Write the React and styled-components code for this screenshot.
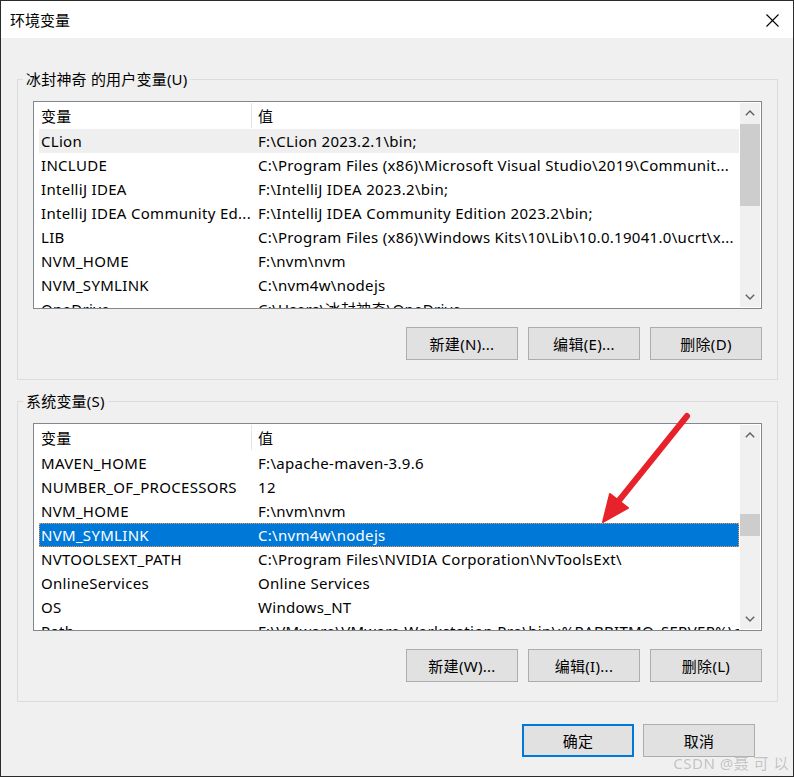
import React from 'react';
import styled, { createGlobalStyle } from 'styled-components';

const GlobalStyle = createGlobalStyle`
  html, body {
    margin: 0;
    padding: 0;
    background: #f0f0f0;
  }
  * {
    box-sizing: border-box;
  }
`;

const FONT = '"Noto Sans", "Noto Sans CJK SC", sans-serif';

const Window = styled.div`
  position: relative;
  width: 794px;
  height: 777px;
  border: 1px solid #2b2b2b;
  background: #f0f0f0;
  display: flex;
  flex-direction: column;
  font-family: ${FONT};
  font-size: 15px;
  color: #000;
  overflow: hidden;
`;

const TitleBar = styled.div`
  height: 37px;
  flex: none;
  background: #fff;
  display: flex;
  align-items: center;
  justify-content: space-between;
  padding: 0 14px 0 9px;
`;

const Title = styled.span`
  font-size: 15px;
  line-height: 20px;
  margin-top: 1px;
`;

const CloseIcon = styled.svg`
  width: 13px;
  height: 13px;
  margin-top: 1px;
`;

const Body = styled.div`
  flex: 1;
  display: flex;
  flex-direction: column;
  padding: 41px 15px 0 16px;
`;

const Group = styled.div`
  border: 1px solid #dcdcdc;
  padding: 0 15px 19px 15px;
  display: flex;
  flex-direction: column;
  margin-top: ${p => p.$gap || 0}px;
`;

const Legend = styled.div`
  align-self: flex-start;
  margin: -11px 0 0 -10px;
  padding: 0 3px;
  height: 20px;
  line-height: 20px;
  background: #f0f0f0;
  white-space: nowrap;
  letter-spacing: 0.2px;
`;

const List = styled.div`
  margin-top: 12px;
  height: 208px;
  border: 1px solid #828790;
  background: #fff;
  display: flex;
  letter-spacing: 0.3px;
`;

const ListContent = styled.div`
  width: 706px;
  flex: none;
  padding: 0 1px 0 5px;
  overflow: hidden;
`;

const HeaderRow = styled.div`
  height: 27px;
  display: flex;
  align-items: center;
`;

const HeaderName = styled.div`
  width: 213px;
  height: 25px;
  line-height: 26px;
  padding-left: 2px;
  border-right: 1px solid #e5e5e5;
`;

const HeaderValue = styled.div`
  padding-left: 6px;
  line-height: 26px;
`;

const Row = styled.div`
  height: 24px;
  width: 700px;
  display: flex;
  line-height: 24px;
  white-space: nowrap;
  background: ${p => (p.$state === 'selected' ? '#0078d7' : p.$state === 'hover' ? '#efefef' : 'transparent')};
  color: ${p => (p.$state === 'selected' ? '#fff' : '#000')};
  outline: ${p => (p.$state === 'selected' ? '1px dotted #ff9a3c' : 'none')};
  outline-offset: -1px;
`;

const NameCell = styled.div`
  width: 213px;
  flex: none;
  padding-left: 2px;
  overflow: hidden;
`;

const ValueCell = styled.div`
  flex: 1;
  padding-left: 6px;
  overflow: hidden;
`;

const ScrollBar = styled.div`
  width: 20px;
  flex: none;
  margin: 1px 1px 1px 0;
  background: #f0f0f0;
  display: flex;
  flex-direction: column;
`;

const ScrollArrow = styled.div`
  height: 20px;
  flex: none;
  display: flex;
  align-items: center;
  justify-content: center;
`;

const Track = styled.div`
  flex: 1;
  padding-top: 1px;
`;

const Thumb = styled.div`
  background: #cdcdcd;
  margin-top: ${p => p.$top}px;
  height: ${p => p.$size}px;
`;

const ButtonRow = styled.div`
  display: flex;
  justify-content: flex-end;
  gap: ${p => p.$gap || 10}px;
  margin-top: ${p => p.$top || 18}px;
  margin-right: ${p => p.$right || 0}px;
`;

const Button = styled.button`
  width: 112px;
  height: 33px;
  background: #e1e1e1;
  border: ${p => (p.$default ? '2px solid #0078d7' : '1px solid #adadad')};
  font-family: ${FONT};
  font-size: 15px;
  letter-spacing: 0.3px;
  color: #000;
  padding: 0;
`;

const Watermark = styled.div`
  position: absolute;
  right: 4px;
  bottom: 3px;
  font-size: 15px;
  color: #c2c2c2;
  text-shadow: 0 0 1px #fff;
  letter-spacing: 0.5px;
`;

const Annotation = styled.svg`
  position: absolute;
  left: 0;
  top: 0;
  pointer-events: none;
`;

const Chevron = ({ up }) => (
  <svg width="10" height="6" viewBox="0 0 10 6">
    <polyline
      points={up ? '0.8,5.2 5,1 9.2,5.2' : '0.8,0.8 5,5 9.2,0.8'}
      fill="none"
      stroke="#606060"
      strokeWidth="1.4"
    />
  </svg>
);

const userVars = [
  { name: 'CLion', value: 'F:\\CLion 2023.2.1\\bin;', state: 'hover' },
  { name: 'INCLUDE', value: 'C:\\Program Files (x86)\\Microsoft Visual Studio\\2019\\Communit...' },
  { name: 'IntelliJ IDEA', value: 'F:\\IntelliJ IDEA 2023.2\\bin;' },
  { name: 'IntelliJ IDEA Community Ed...', value: 'F:\\IntelliJ IDEA Community Edition 2023.2\\bin;' },
  { name: 'LIB', value: 'C:\\Program Files (x86)\\Windows Kits\\10\\Lib\\10.0.19041.0\\ucrt\\x...' },
  { name: 'NVM_HOME', value: 'F:\\nvm\\nvm' },
  { name: 'NVM_SYMLINK', value: 'C:\\nvm4w\\nodejs' },
  { name: 'OneDrive', value: 'C:\\Users\\冰封神奇\\OneDrive' },
];

const systemVars = [
  { name: 'MAVEN_HOME', value: 'F:\\apache-maven-3.9.6' },
  { name: 'NUMBER_OF_PROCESSORS', value: '12' },
  { name: 'NVM_HOME', value: 'F:\\nvm\\nvm' },
  { name: 'NVM_SYMLINK', value: 'C:\\nvm4w\\nodejs', state: 'selected' },
  { name: 'NVTOOLSEXT_PATH', value: 'C:\\Program Files\\NVIDIA Corporation\\NvToolsExt\\' },
  { name: 'OnlineServices', value: 'Online Services' },
  { name: 'OS', value: 'Windows_NT' },
  { name: 'Path', value: 'F:\\VMware\\VMware Workstation Pro\\bin\\;%RABBITMQ_SERVER%\\sbin;%E' },
];

const VarList = ({ rows, thumbTop, thumbSize }) => (
  <List>
    <ListContent>
      <HeaderRow>
        <HeaderName>变量</HeaderName>
        <HeaderValue>值</HeaderValue>
      </HeaderRow>
      {rows.map((r, i) => (
        <Row key={i} $state={r.state}>
          <NameCell>{r.name}</NameCell>
          <ValueCell>{r.value}</ValueCell>
        </Row>
      ))}
    </ListContent>
    <ScrollBar>
      <ScrollArrow><Chevron up /></ScrollArrow>
      <Track>
        <Thumb $top={thumbTop} $size={thumbSize} />
      </Track>
      <ScrollArrow><Chevron /></ScrollArrow>
    </ScrollBar>
  </List>
);

export default function App() {
  return (
    <>
      <GlobalStyle />
      <Window>
        <TitleBar>
          <Title>环境变量</Title>
          <CloseIcon viewBox="0 0 13 13">
            <path d="M0.5 0.5 L12.5 12.5 M12.5 0.5 L0.5 12.5" stroke="#000" strokeWidth="1.1" fill="none" />
          </CloseIcon>
        </TitleBar>
        <Body>
          <Group>
            <Legend>冰封神奇 的用户变量(U)</Legend>
            <VarList rows={userVars} thumbTop={0} thumbSize={82} />
            <ButtonRow>
              <Button>新建(N)...</Button>
              <Button>编辑(E)...</Button>
              <Button>删除(D)</Button>
            </ButtonRow>
          </Group>
          <Group $gap={21}>
            <Legend>系统变量(S)</Legend>
            <VarList rows={systemVars} thumbTop={68} thumbSize={22} />
            <ButtonRow>
              <Button>新建(W)...</Button>
              <Button>编辑(I)...</Button>
              <Button>删除(L)</Button>
            </ButtonRow>
          </Group>
          <ButtonRow $top={22} $gap={9} $right={23}>
            <Button $default>确定</Button>
            <Button>取消</Button>
          </ButtonRow>
        </Body>
        <Watermark>CSDN @聂 可 以</Watermark>
        <Annotation width="794" height="777" viewBox="0 0 794 777">
          <line x1="686" y1="415" x2="616" y2="502" stroke="#e8222a" strokeWidth="6" strokeLinecap="round" />
          <polygon points="602,521 609,493 627,507" fill="#e8222a" stroke="#e8222a" strokeWidth="2" strokeLinejoin="round" />
        </Annotation>
      </Window>
    </>
  );
}
